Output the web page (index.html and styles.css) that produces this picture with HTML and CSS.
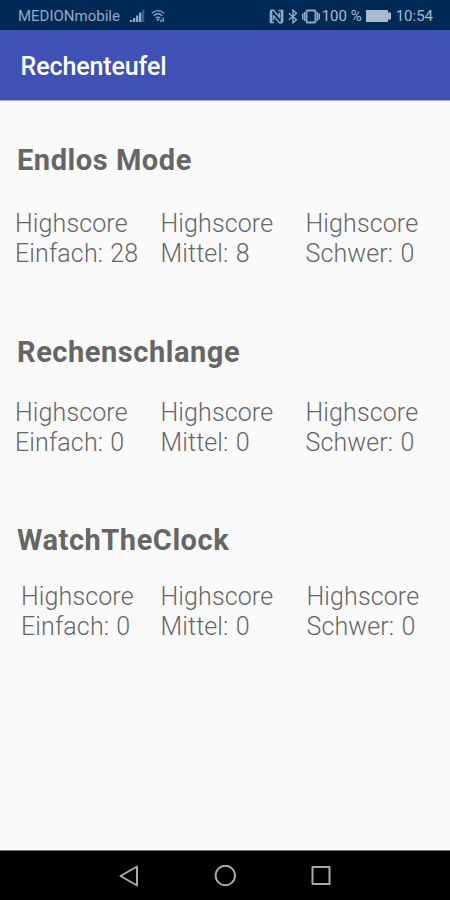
FILE: index.html
```html
<!DOCTYPE html>
<html lang="de">
<head>
    <meta charset="UTF-8">
    <meta name="viewport" content="width=device-width, initial-scale=1.0">
    <title>Rechenteufel</title>
    <link rel="stylesheet" href="styles.css">
</head>
<body>
    <!-- Status Bar -->
    <div class="status-bar">
        <span class="carrier">MEDIONmobile</span>
        <svg class="signal" width="15" height="14" viewBox="0 0 15 14">
            <path d="M0 11h2.200v2H0zM3 9h2.300v4H3zM6 6.500h2.300V13H6zM9 3.500h2.500V13H9z"/>
            <path class="dim" d="M12 0.500h2.300V13H12z"/>
        </svg>
        <svg class="wifi" width="14" height="14" viewBox="0 0 14 14">
            <path class="line" d="M0.800 4.200Q7 -1 13.200 4.200M2.800 6.700Q7 3 11.200 6.700M4.800 9Q7 7.200 9.200 9"/>
            <path d="M5.200 9.800h3.600L7 12.500zM9.300 10.500h1.300V13H9.300zM11.500 8.500h1.300V13h-1.300z"/>
        </svg>

        <div class="status-right">
            <svg class="nfc" width="15" height="15" viewBox="0 0 15 15">
                <path class="line" d="M5 13.500H1.500V3Q1.500 1.200 3.300 1.200H4.500L10.300 8V3.800M9.500 1.500H13.500V12Q13.500 13.800 11.700 13.800H10.500L4.500 7V11.500"/>
                <path d="M0.800 3Q0.800 0.500 3.300 0.500V14H0.800zM11.700 1H14.200V12Q14.200 14.500 11.700 14.500z"/>
            </svg>
            <svg class="bluetooth" width="10" height="15" viewBox="0 0 10 15">
                <path class="line" d="M0.800 4.200L8.500 10.700L5 13.800V1.200L8.500 4.300L0.800 10.800"/>
            </svg>
            <svg class="vibrate" width="18" height="15" viewBox="0 0 18 15">
                <path class="line thick" d="M5.500 1.500h7q1 0 1 1v10q0 1 -1 1h-7q-1 0 -1 -1v-10q0 -1 1 -1z"/>
                <path class="line" d="M2.500 3v9M0.700 4.500v6M15.500 3v9M17.300 4.500v6"/>
            </svg>
            <span class="percent">100 %</span>
            <svg class="battery" width="25" height="12" viewBox="0 0 25 12">
                <path d="M0 0h22v2.500h3v7h-3V12H0z"/>
            </svg>
            <span class="clock">10:54</span>
        </div>
    </div>

    <!-- App Bar -->
    <header class="app-bar">
        <h1>Rechenteufel</h1>
    </header>

    <!-- Highscores -->
    <main class="content">
        <section class="mode endless">
            <h2>Endlos Mode</h2>
            <div class="scores">
                <p>Highscore<br>Einfach: 28</p>
                <p>Highscore<br>Mittel: 8</p>
                <p>Highscore<br>Schwer: 0</p>
            </div>
        </section>

        <section class="mode snake">
            <h2>Rechenschlange</h2>
            <div class="scores">
                <p>Highscore<br>Einfach: 0</p>
                <p>Highscore<br>Mittel: 0</p>
                <p>Highscore<br>Schwer: 0</p>
            </div>
        </section>

        <section class="mode watch">
            <h2>WatchTheClock</h2>
            <div class="scores">
                <p>Highscore<br>Einfach: 0</p>
                <p>Highscore<br>Mittel: 0</p>
                <p>Highscore<br>Schwer: 0</p>
            </div>
        </section>
    </main>

    <!-- Navigation Bar -->
    <nav class="nav-bar">
        <svg width="22" height="22" viewBox="0 0 22 22">
            <path d="M19 1.500v19L2.500 11z"/>
        </svg>
        <svg width="22" height="22" viewBox="0 0 22 22">
            <circle cx="11.300" cy="10.500" r="9.700"/>
        </svg>
        <svg width="22" height="22" viewBox="0 0 22 22">
            <path d="M2.500 2h17v17h-17z"/>
        </svg>
    </nav>
</body>
</html>
```
FILE: styles.css
```css
/* Reset and global styles */
* {
    margin: 0;
    padding: 0;
    box-sizing: border-box;
}

body {
    font-family: Roboto, sans-serif;
    background-color: #fafafa;
    color: #666;
    height: 900px;
    display: flex;
    flex-direction: column;
    overflow: hidden;
}

/* Status Bar */
.status-bar {
    height: 30px;
    display: flex;
    align-items: center;
    padding: 2px 17px 0 18px;
    background-color: #002956;
    color: #93a9c3;
    font-size: 15px;
    line-height: 20px;
    white-space: nowrap;
}

.status-bar svg {
    flex: none;
    fill: #93a9c3;
}

.status-bar .line {
    fill: none;
    stroke: #93a9c3;
    stroke-width: 1.4;
}

.status-bar .thick {
    stroke-width: 1.9;
}

.status-bar .dim {
    opacity: 0.4;
}

.signal {
    margin-left: 10px;
}

.wifi {
    margin-left: 6px;
}

.status-right {
    margin-left: auto;
    display: flex;
    align-items: center;
    color: #a9bccd;
}

.bluetooth {
    margin-left: 4px;
}

.vibrate {
    margin: 0 2px 0 4px;
}

.status-bar .battery {
    margin: 0 5px 0 4px;
    fill: #a9bccd;
}

.clock {
    font-size: 15px;
}

/* App Bar */
.app-bar {
    height: 71px;
    display: flex;
    align-items: center;
    padding: 3px 20.5px 0;
    background-color: #3f51b5;
    border-bottom: 1px solid #a3abd8;
}

.app-bar h1 {
    font-size: 25px;
    font-weight: 500;
    letter-spacing: -0.1px;
    color: #fff;
}

/* Highscores */
.content {
    flex: 1;
    padding-top: 42px;
}

.mode h2 {
    padding-left: 17px;
    font-size: 29px;
    font-weight: 700;
    line-height: 34px;
    letter-spacing: 0.55px;
}

.scores {
    display: grid;
    grid-template-columns: 145.5px 145px 1fr;
    padding-left: 15px;
    font-size: 25px;
    font-weight: 300;
    line-height: 29.5px;
    letter-spacing: 0.12px;
    word-spacing: 1px;
}

.endless {
    height: 192px;
}

.endless .scores {
    margin-top: 32px;
}

.snake {
    height: 188px;
}

.snake .scores {
    margin-top: 29px;
}

.watch .scores {
    margin-top: 25px;
    grid-template-columns: 139.5px 146px 1fr;
    padding-left: 21px;
}

/* Navigation Bar */
.nav-bar {
    height: 50px;
    display: flex;
    justify-content: center;
    align-items: center;
    gap: 74px;
    background-color: #000;
    border-top: 1px solid #777;
}

.nav-bar svg {
    fill: none;
    stroke: #aaa;
    stroke-width: 2;
    stroke-linejoin: round;
}
```
